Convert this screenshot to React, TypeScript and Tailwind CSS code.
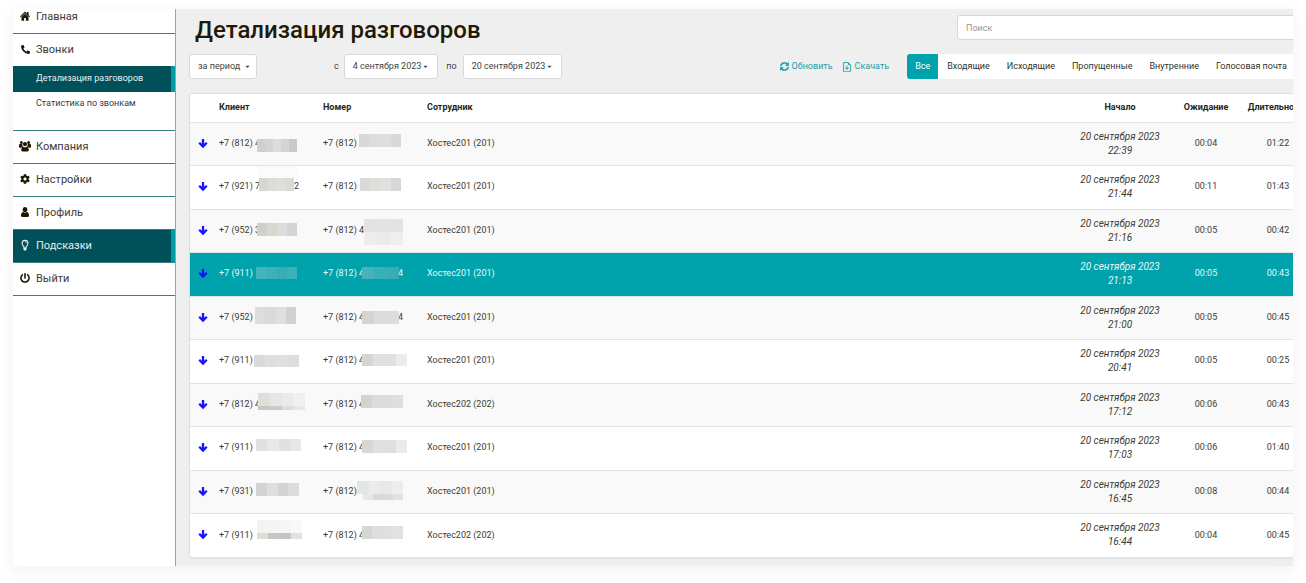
import { useState } from "react";
import type { ReactNode } from "react";
import clsx from "clsx";
import { FaCaretDown, FaCog, FaPhoneAlt, FaPowerOff, FaSyncAlt } from "react-icons/fa";
import { BsFileEarmarkArrowDown } from "react-icons/bs";

/** A blurred-out patch: x, y, width, height inside the cell, then one list of colours per line. */
interface Patch {
  box: [number, number, number, number];
  lines: string[][];
}

interface Phone {
  text: string;
  tail?: string;
  patches: Patch[];
}

interface Call {
  client: Phone;
  number: Phone;
  employee: string;
  time: string;
  wait: string;
  duration: string;
}

const FILTERS = ["Все", "Входящие", "Исходящие", "Пропущенные", "Внутренние", "Голосовая почта"];

const CALLS: Call[] = [
  {
    client: { text: "+7 (812) 4", patches: [{ box: [38, 16, 40, 13], lines: [["#cfcfce", "#d5d4d0", "#dddcd9", "#d4d4d4", "#cbc8ca"]] }] },
    number: { text: "+7 (812)", patches: [{ box: [36, 11, 42, 13], lines: [["#d9dad7", "#dedfda", "#dfdfdf", "#d9d9dc"]] }] },
    employee: "Хостес201 (201)", time: "22:39", wait: "00:04", duration: "01:22",
  },
  {
    client: {
      text: "+7 (921) 7",
      tail: "2",
      patches: [
        { box: [39, 0, 39, 12], lines: [["#fbfbfb"]] },
        { box: [40, 12, 35, 13], lines: [["#d5d7d2", "#dcddd9", "#dedfda", "#d9dbd9"]] },
      ],
    },
    number: { text: "+7 (812)", patches: [{ box: [37, 12, 41, 13], lines: [["#dadada", "#dedfdb", "#e0e0e0", "#d7d6d9"]] }] },
    employee: "Хостес201 (201)", time: "21:44", wait: "00:11", duration: "01:43",
  },
  {
    client: { text: "+7 (952) 3", patches: [{ box: [38, 13, 40, 13], lines: [["#cfcfce", "#d8d7d0", "#dcdcdc", "#d3d4d3"]] }] },
    number: {
      text: "+7 (812) 4",
      patches: [{ box: [41, 9, 39, 26], lines: [["#e2e3e4", "#e6e4e3", "#e3e3e3"], ["#eceeec", "#ebe9e9", "#eeeeee"]] }],
    },
    employee: "Хостес201 (201)", time: "21:16", wait: "00:05", duration: "00:42",
  },
  {
    client: { text: "+7 (911)", patches: [{ box: [37, 14, 41, 12], lines: [["#45b4bb", "#3db0b8", "#36aeb6", "#3bb1b8"]] }] },
    number: { text: "+7 (812) 4", tail: "4", patches: [{ box: [39, 14, 37, 12], lines: [["#47b3b9", "#36b1b8", "#3aacb4"]] }] },
    employee: "Хостес201 (201)", time: "21:13", wait: "00:05", duration: "00:43",
  },
  {
    client: { text: "+7 (952)", patches: [{ box: [36, 10, 41, 17], lines: [["#dddddd", "#dadad7", "#dfdfdf", "#d0d2cf"]] }] },
    number: { text: "+7 (812) 4", tail: "4", patches: [{ box: [39, 14, 37, 13], lines: [["#d3d5ce", "#dcdddb", "#dcdbdd"]] }] },
    employee: "Хостес201 (201)", time: "21:00", wait: "00:05", duration: "00:45",
  },
  {
    client: { text: "+7 (911)", patches: [{ box: [35, 15, 45, 12], lines: [["#dadada", "#dedfdc", "#e0e0e0", "#dddddd"]] }] },
    number: { text: "+7 (812) 4", patches: [{ box: [39, 14, 45, 12], lines: [["#d5d6d0", "#e0e0e0", "#e1e0e0", "#ebebeb"]] }] },
    employee: "Хостес201 (201)", time: "20:41", wait: "00:05", duration: "00:25",
  },
  {
    client: {
      text: "+7 (812) 4",
      patches: [
        { box: [39, 9, 47, 13], lines: [["#dfe0da", "#e6e6e6", "#eaeaea", "#f0f0f0"]] },
        { box: [39, 22, 47, 4], lines: [["#c8c8c6", "#cbcbc9", "#dddddd", "#e7e7e7"]] },
      ],
    },
    number: { text: "+7 (812) 4", patches: [{ box: [38, 11, 42, 13], lines: [["#d3d4cf", "#dcdddb", "#dddcdd", "#dfdfdf"]] }] },
    employee: "Хостес202 (202)", time: "17:12", wait: "00:06", duration: "00:43",
  },
  {
    client: { text: "+7 (911)", patches: [{ box: [37, 12, 45, 12], lines: [["#e0e1dc", "#e8e8e8", "#e4dfdc", "#e6e8e6"]] }] },
    number: { text: "+7 (812) 4", patches: [{ box: [39, 13, 45, 13], lines: [["#d5d9d0", "#e0e0e0", "#e0dfdf", "#ebebeb"]] }] },
    employee: "Хостес201 (201)", time: "17:03", wait: "00:06", duration: "01:40",
  },
  {
    client: { text: "+7 (931)", patches: [{ box: [37, 12, 43, 13], lines: [["#d3d3d2", "#dedede", "#d3d3d0", "#dcdcdc"]] }] },
    number: {
      text: "+7 (812)",
      patches: [
        { box: [34, 10, 46, 13], lines: [["#e5e6e1", "#ebebeb", "#e8e8e8", "#ededed"]] },
        { box: [40, 23, 40, 6], lines: [["#e7e8e4", "#d9d9d9", "#dadada", "#e2e2e2"]] },
      ],
    },
    employee: "Хостес201 (201)", time: "16:45", wait: "00:08", duration: "00:44",
  },
  {
    client: {
      text: "+7 (911)",
      patches: [
        { box: [38, 6, 45, 13], lines: [["#f3f4f1", "#f4f4f4", "#f6f6f6", "#f9f9f7"]] },
        { box: [38, 19, 45, 6], lines: [["#dcddd4", "#c6c7c0", "#c5c5c5", "#e1e1e1"]] },
      ],
    },
    number: { text: "+7 (812) 4", patches: [{ box: [39, 12, 41, 13], lines: [["#d5d8d0", "#dedede", "#dfdfdf", "#e2e0e3"]] }] },
    employee: "Хостес202 (202)", time: "16:44", wait: "00:04", duration: "00:45",
  },
];

const ACTIVE_CALL = 3;

function Glyph({ children }: { children: ReactNode }) {
  return (
    <svg width="12" height="12" viewBox="0 0 12 12" fill="currentColor" className="shrink-0">
      {children}
    </svg>
  );
}

function HomeGlyph() {
  return (
    <Glyph>
      <path d="M6 1.6 1 6.4l.8.8L6 3.300l4.200 3.900.8-.8-1.400-1.300V2H8.100v1.600z" />
      <path d="M6 3.800 2.500 7.100v3.700h2.600V8h1.800v2.800h2.600V7.100z" />
    </Glyph>
  );
}

function PeopleGlyph() {
  return (
    <Glyph>
      <circle cx="2.4" cy="2.4" r="1.5" />
      <circle cx="9.6" cy="2.4" r="1.5" />
      <circle cx="6" cy="4.1" r="2.1" />
      <path d="M0 6.9V5.2C0 4.3.6 4 1.2 4h2c.1 1.4.4 1.8 1 2.4-1 .1-1.6.5-2 1.3H.8C.3 7.7 0 7.4 0 6.9zM12 6.9V5.2c0-.9-.6-1.2-1.2-1.2h-2c-.1 1.4-.4 1.8-1 2.4 1 .1 1.6.5 2 1.3h1.4c.5 0 .8-.3.8-.8z" />
      <path d="M2.2 10.1c0-2 .6-3.3 2-3.3.9.7 2.7.7 3.6 0 1.4 0 2 1.3 2 3.3 0 .8-.5 1.3-1.3 1.3h-5c-.8 0-1.3-.5-1.3-1.3z" />
    </Glyph>
  );
}

function PersonGlyph() {
  return (
    <Glyph>
      <ellipse cx="6" cy="3.6" rx="2.3" ry="2.7" />
      <path d="M2 9.6C2 7.4 2.8 6.2 4.3 6c1 .9 2.4.9 3.4 0C9.2 6.2 10 7.4 10 9.6c0 1-.5 1.4-1.3 1.4H3.3C2.5 11 2 10.6 2 9.6z" />
    </Glyph>
  );
}

function BulbGlyph() {
  return (
    <Glyph>
      <path
        d="M4.7 8.3C4.6 7 3.1 6.3 3.1 4.3a2.9 2.9 0 0 1 5.8 0c0 2-1.5 2.7-1.6 4z"
        fill="none"
        stroke="currentColor"
        strokeWidth="1.1"
      />
      <path d="M6 2.5c1 0 1.700.7 1.700 1.500H7c0-.4-.4-.8-1-.8zM4.400 9h3.200v1.200c0 .7-.6 1.300-1.600 1.300s-1.600-.6-1.600-1.300z" />
    </Glyph>
  );
}

function ArrowGlyph() {
  return (
    <Glyph>
      <path d="M6 1v7.500M2.200 4.800 6 8.600l3.800-3.800" fill="none" stroke="currentColor" strokeWidth="2.300" />
    </Glyph>
  );
}

function NavLink({ icon, label, active }: { icon: ReactNode; label: string; active?: boolean }) {
  return (
    <a
      href="#"
      className={clsx(
        "flex h-[33px] items-center gap-[5px] border-b border-[#3b7f86] pl-[6px] text-[11px]",
        active ? "border-r-4 border-r-[#009ca6] bg-[#005059] text-[#e6f1f1]" : "text-[#3c3c32]"
      )}
    >
      <span className={clsx("flex w-3 justify-center pb-[2px]", !active && "text-[#1f1800]")}>{icon}</span>
      {label}
    </a>
  );
}

function Sidebar() {
  return (
    <nav className="w-[163px] shrink-0 border-r border-[#5bbfc1] bg-white">
      <div className="-mt-2">
        <NavLink icon={<HomeGlyph />} label="Главная" />
        <a href="#" className="flex h-8 items-center gap-[5px] pl-[6px] text-[11px] text-[#3c3c32]">
          <span className="flex w-3 justify-center pb-[2px] text-[#1f1800]">
            <FaPhoneAlt size={9} />
          </span>
          Звонки
        </a>
        <div className="border-b border-[#3b7f86] pb-[14px] text-[9px]">
          <a
            href="#"
            className="flex h-[26px] items-center border-r-4 border-r-[#009ca6] bg-[#005059] pl-[23px] text-[#e6f1f1]"
          >
            Детализация разговоров
          </a>
          <a href="#" className="flex h-6 items-center pl-[23px] text-[#3c3c32]">
            Статистика по звонкам
          </a>
        </div>
        <NavLink icon={<PeopleGlyph />} label="Компания" />
        <NavLink icon={<FaCog size={10} />} label="Настройки" />
        <NavLink icon={<PersonGlyph />} label="Профиль" />
        <NavLink icon={<BulbGlyph />} label="Подсказки" active />
        <NavLink icon={<FaPowerOff size={10} />} label="Выйти" />
      </div>
    </nav>
  );
}

function DateButton({ label }: { label: string }) {
  return (
    <button className="flex h-[25px] items-center gap-px rounded-[3px] border border-[#d9d9d9] bg-white px-2">
      {label}
      <FaCaretDown size={7} />
    </button>
  );
}

function Toolbar() {
  const [filter, setFilter] = useState(FILTERS[0]);

  return (
    <div className="mt-[9px] flex items-center text-[9px] text-[#44443c]">
      <div className="relative">
        <select
          aria-label="Период"
          className="block h-[25px] w-[68px] appearance-none rounded-[3px] border border-[#d9d9d9] bg-white pl-2"
        >
          <option>за период</option>
        </select>
        <FaCaretDown size={7} className="pointer-events-none absolute top-[9px] right-[6px]" />
      </div>
      <span className="ml-[77px]">с</span>
      <div className="ml-[5px]">
        <DateButton label="4 сентября 2023" />
      </div>
      <span className="mr-[6px] ml-2">по</span>
      <DateButton label="20 сентября 2023" />

      <div className="ml-auto flex items-center gap-[9px] pr-[18px] text-[#1a9fa8]">
        <button className="flex items-center gap-[3px]">
          <FaSyncAlt size={9} stroke="currentColor" strokeWidth={20} />
          Обновить
        </button>
        <button className="flex items-center gap-[3px]">
          <BsFileEarmarkArrowDown size={10} stroke="currentColor" strokeWidth={0.4} />
          Скачать
        </button>
      </div>
      <div className="flex gap-px rounded-[3px] bg-white pr-7">
        {FILTERS.map((name) => (
          <button
            key={name}
            onClick={() => setFilter(name)}
            className={clsx(
              "h-[25px] px-2 whitespace-nowrap",
              name === filter ? "rounded-l-[3px] bg-[#00a2ac] text-white" : "text-[#33332b]"
            )}
          >
            {name}
          </button>
        ))}
      </div>
    </div>
  );
}

function PhoneCell({ phone }: { phone: Phone }) {
  return (
    <td className="relative p-0">
      {phone.text}
      {phone.tail && <span className="ml-[34px]">{phone.tail}</span>}
      <svg className="pointer-events-none absolute top-0 left-0" width="104" height="43" shapeRendering="crispEdges">
        {phone.patches.map(({ box: [x, y, w, h], lines }) =>
          lines.map((colors, row) =>
            colors.map((fill, col) => (
              <rect
                key={`${x}-${y}-${row}-${col}`}
                x={x + (col * w) / colors.length}
                y={y + (row * h) / lines.length}
                width={w / colors.length}
                height={h / lines.length}
                fill={fill}
              />
            ))
          )
        )}
      </svg>
    </td>
  );
}

function CallsTable() {
  return (
    <div className="mt-[14px] overflow-hidden rounded-[3px] border border-[#e0e0e0] bg-white shadow-xs">
      <table className="w-full table-fixed border-collapse text-[9px] text-[#3c3c32]">
        <colgroup>
          <col className="w-[29px]" />
          <col className="w-[104px]" />
          <col className="w-[104px]" />
          <col />
          <col className="w-[100px]" />
          <col className="w-[72px]" />
          <col className="w-[72px]" />
          <col className="w-[8px]" />
        </colgroup>
        <thead>
          <tr className="h-[28px] text-left text-[#26261c]">
            <th aria-label="Направление" />
            <th className="p-0">Клиент</th>
            <th className="p-0">Номер</th>
            <th className="p-0">Сотрудник</th>
            <th className="p-0 text-center">Начало</th>
            <th className="p-0 text-center">Ожидание</th>
            <th className="p-0 text-center">Длительность</th>
            <th className="p-0" />
          </tr>
        </thead>
        <tbody>
          {CALLS.map((call, i) => (
            <tr
              key={call.time}
              className={clsx(
                "h-[43px] border-t border-[#e3e3e3] even:h-[44px]",
                i === ACTIVE_CALL ? "bg-[#00a2ac] text-[#e8f7f7]" : "odd:bg-[#f9f9f9]"
              )}
            >
              <td className="p-0 pl-[7px] text-[#1414ff]">
                <ArrowGlyph />
              </td>
              <PhoneCell phone={call.client} />
              <PhoneCell phone={call.number} />
              <td className="p-0">{call.employee}</td>
              <td className="p-0 text-center text-[10px] leading-[14px] italic">
                20 сентября 2023
                <br />
                {call.time}
              </td>
              <td className="p-0 text-center">{call.wait}</td>
              <td className="p-0 text-center">{call.duration}</td>
              <td className="p-0" />
            </tr>
          ))}
        </tbody>
      </table>
    </div>
  );
}

export default function App() {
  return (
    <div className="bg-white px-[13px] pt-[9px] pb-[17px] font-['Roboto',sans-serif]">
      <div className="flex overflow-hidden bg-[#efefef] shadow-[0_4px_16px_rgba(0,0,0,0.06)]">
        <Sidebar />
        <main className="min-w-0 flex-1 overflow-hidden pb-2 pl-[13px]">
          {/* the content runs on past the right edge of the frame */}
          <div className="-mr-[30px]">
            <header className="flex items-start justify-between pt-[6px]">
              <h1 className="pl-[6px] text-[24px] leading-[30px] font-medium text-[#1f1a08]">Детализация разговоров</h1>
              <input
                type="search"
                aria-label="Поиск"
                placeholder="Поиск"
                className="h-[25px] w-[366px] rounded-[3px] border border-[#d6d6d6] bg-white px-2 text-[9px] placeholder:text-[#999]"
              />
            </header>
            <Toolbar />
            <CallsTable />
          </div>
        </main>
      </div>
    </div>
  );
}
